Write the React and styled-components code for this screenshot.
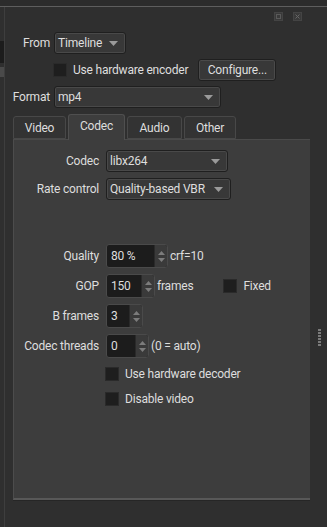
import React from 'react';
import styled, { createGlobalStyle } from 'styled-components';

const GlobalStyle = createGlobalStyle`
  html, body {
    margin: 0;
    padding: 0;
    background: #2f2f2f;
    color: #dedede;
    font-family: Roboto, "Liberation Sans", sans-serif;
    font-size: 12px;
    letter-spacing: -0.2px;
    overflow: hidden;
  }
`;

const Page = styled.div`
  display: flex;
  flex-direction: column;
  height: 100vh;
`;

const TopEdge = styled.div`
  height: 6px;
  background: #2c2c2c;
  border-bottom: 1px solid #5e5e5e;
`;

const Body = styled.div`
  flex: 1;
  display: flex;
  min-height: 0;
`;

const LeftStrip = styled.div`
  width: 4px;
  border-right: 1px solid #3e3e3e;
  background: #2f2f2f;
  display: flex;
  flex-direction: column;
  padding-top: 34px;
  gap: 4px;
`;

const StripBox = styled.div`
  height: ${(p) => p.$h}px;
  background: ${(p) => p.$bg};
`;

const Dock = styled.div`
  flex: 1;
  display: flex;
  flex-direction: column;
  padding: 0 0 27px 7px;
  min-width: 0;
`;

const TitleBar = styled.div`
  height: 18px;
  display: flex;
  justify-content: flex-end;
  align-items: center;
  gap: 10px;
  padding-right: 8px;
`;

const TitleButton = styled.div`
  width: 9px;
  height: 9px;
  display: flex;
`;

const TopForm = styled.div`
  display: grid;
  grid-template-columns: 38px auto;
  column-gap: 4px;
  row-gap: 5px;
  align-items: center;
  padding-top: 7px;
  margin-bottom: 5px;
`;

const Label = styled.div`
  text-align: right;
  white-space: nowrap;
`;

const Combo = styled.div`
  width: ${(p) => p.$w}px;
  height: 22px;
  box-sizing: border-box;
  border: 1px solid #1f1f1f;
  border-radius: 3px;
  background: #383838;
  box-shadow: inset 0 0 0 1px #494949;
  display: flex;
  align-items: center;
  justify-content: space-between;
  gap: 6px;
  padding: 0 7px 0 3px;
  white-space: nowrap;

  svg {
    flex: none;
  }
`;

const HwRow = styled.div`
  display: flex;
  align-items: center;
  height: 22px;
  margin-left: -1px;
`;

const CheckBox = styled.div`
  width: 14px;
  height: 14px;
  box-sizing: border-box;
  background: #1e1e1e;
  border: 1px solid #2a2a2a;
  flex: none;
`;

const CheckLabel = styled.span`
  margin-left: 6px;
  white-space: nowrap;
`;

const Button = styled.div`
  margin-left: 10px;
  height: 22px;
  box-sizing: border-box;
  width: 78px;
  display: flex;
  align-items: center;
  justify-content: center;
  border: 1px solid #1f1f1f;
  border-radius: 3px;
  background: #383838;
  box-shadow: inset 0 0 0 1px #4a4a4a;
  white-space: nowrap;
`;

const TabBar = styled.div`
  display: flex;
  align-items: flex-end;
  gap: 2px;
  margin-left: 1px;
  height: 26px;
`;

const Tab = styled.div`
  width: ${(p) => p.$w}px;
  height: ${(p) => (p.$active ? 26 : 23)}px;
  box-sizing: border-box;
  padding-bottom: ${(p) => (p.$active ? 3 : 0)}px;
  display: flex;
  align-items: center;
  justify-content: center;
  border: 1px solid ${(p) => (p.$active ? '#4f4f4f' : '#484848')};
  border-bottom: ${(p) => (p.$active ? 'none' : '1px solid #484848')};
  border-radius: 3px 3px 0 0;
  background: ${(p) => (p.$active ? '#3d3d3d' : '#333333')};
  margin-bottom: ${(p) => (p.$active ? '-1px' : '0')};
  position: relative;
  z-index: ${(p) => (p.$active ? 1 : 0)};
`;

const PaneRow = styled.div`
  flex: 1;
  display: flex;
  min-height: 0;
`;

const Pane = styled.div`
  width: 297px;
  box-sizing: border-box;
  margin-left: 1px;
  background: #3d3d3d;
  border-top: 1px solid #4a4a4a;
  border-left: 1px solid #4c4c4c;
  border-bottom: 2px solid #585858;
  box-shadow: 0 1px 0 #262626;
  padding: 10px 0 0 9px;
`;

const Form = styled.div`
  display: grid;
  grid-template-columns: 76px auto;
  column-gap: 7px;
  row-gap: 6px;
  align-items: center;
`;

const Field = styled.div`
  display: flex;
  align-items: center;
  height: ${(p) => p.$h || 24}px;
  white-space: nowrap;
`;

const Spacer = styled.div`
  grid-column: 1 / 3;
  height: 32px;
`;

const Spin = styled.div`
  width: ${(p) => p.$w}px;
  height: 24px;
  box-sizing: border-box;
  display: flex;
  border: 1px solid #4a4a4a;
  border-radius: 3px;
  background: #1c1c1c;
  flex: none;
`;

const SpinText = styled.div`
  flex: 1;
  display: flex;
  align-items: center;
  padding-left: 4px;
`;

const SpinButtons = styled.div`
  width: 12px;
  display: flex;
  flex-direction: column;
  justify-content: center;
  align-items: center;
  gap: 3px;
  background: #3a3a3a;
  border-left: 1px solid #2a2a2a;
  border-radius: 0 2px 2px 0;
`;

const After = styled.span`
  margin-left: 2px;
`;

const FixedCheck = styled.div`
  display: flex;
  align-items: center;
  margin-left: 30px;
`;

const Splitter = styled.div`
  width: 17px;
  display: flex;
  justify-content: center;
  padding-top: 322px;
  padding-left: 1px;
  box-sizing: border-box;
`;

const Grip = styled.div`
  width: 3px;
  height: 18px;
  background: repeating-linear-gradient(#7a7a7a 0 2px, transparent 2px 3px);
`;

const Arrow = () => (
  <svg width="9" height="5" viewBox="0 0 9 5">
    <path d="M0 0h9L4.5 5z" fill="#9a9a9a" />
  </svg>
);

const SpinArrow = ({ up }) => (
  <svg width="7" height="4" viewBox="0 0 7 4">
    <path d={up ? 'M0 4h7L3.5 0z' : 'M0 0h7L3.5 4z'} fill="#7c7c7c" />
  </svg>
);

const SpinBox = ({ w, value }) => (
  <Spin $w={w}>
    <SpinText>{value}</SpinText>
    <SpinButtons>
      <SpinArrow up />
      <SpinArrow />
    </SpinButtons>
  </Spin>
);

const CheckItem = ({ children }) => (
  <Field $h={19} style={{ marginLeft: -1 }}>
    <CheckBox />
    <CheckLabel>{children}</CheckLabel>
  </Field>
);

const App = () => (
  <Page>
    <GlobalStyle />
    <TopEdge />
    <Body>
      <LeftStrip>
        <StripBox $h={22} $bg="#1c1c1c" />
        <StripBox $h={10} $bg="#4a4a4a" />
      </LeftStrip>
      <Dock>
        <TitleBar>
          <TitleButton>
            <svg width="9" height="9" viewBox="0 0 9 9">
              <rect x="0.5" y="0.5" width="8" height="8" fill="#3a3a3a" stroke="#444" />
              <rect x="2.5" y="2.5" width="4" height="4" fill="none" stroke="#5a5a5a" />
            </svg>
          </TitleButton>
          <TitleButton>
            <svg width="9" height="9" viewBox="0 0 9 9">
              <rect x="0.5" y="0.5" width="8" height="8" fill="#3a3a3a" stroke="#444" />
              <path d="M2.5 2.5l4 4M6.5 2.5l-4 4" stroke="#666" />
            </svg>
          </TitleButton>
        </TitleBar>
        <TopForm>
          <Label>From</Label>
          <Combo $w={72}>
            Timeline
            <Arrow />
          </Combo>
          <div />
          <HwRow>
            <CheckBox />
            <CheckLabel>Use hardware encoder</CheckLabel>
            <Button>Configure...</Button>
          </HwRow>
          <Label>Format</Label>
          <Combo $w={167}>
            mp4
            <Arrow />
          </Combo>
        </TopForm>
        <TabBar>
          <Tab $w={53}>Video</Tab>
          <Tab $w={57} $active>Codec</Tab>
          <Tab $w={55}>Audio</Tab>
          <Tab $w={52}>Other</Tab>
        </TabBar>
        <PaneRow>
          <Pane>
            <Form>
              <Label>Codec</Label>
              <Field $h={22}>
                <Combo $w={122}>
                  libx264
                  <Arrow />
                </Combo>
              </Field>
              <Label>Rate control</Label>
              <Field $h={22}>
                <Combo $w={125}>
                  Quality-based VBR
                  <Arrow />
                </Combo>
              </Field>
              <Spacer />
              <Label>Quality</Label>
              <Field>
                <SpinBox w={62} value="80 %" />
                <After>crf=10</After>
              </Field>
              <Label>GOP</Label>
              <Field>
                <SpinBox w={49} value="150" />
                <After>frames</After>
                <FixedCheck>
                  <CheckBox />
                  <CheckLabel>Fixed</CheckLabel>
                </FixedCheck>
              </Field>
              <Label>B frames</Label>
              <Field>
                <SpinBox w={37} value="3" />
              </Field>
              <Label>Codec threads</Label>
              <Field>
                <SpinBox w={43} value="0" />
                <After>(0 = auto)</After>
              </Field>
              <div />
              <CheckItem>Use hardware decoder</CheckItem>
              <div />
              <CheckItem>Disable video</CheckItem>
            </Form>
          </Pane>
        </PaneRow>
      </Dock>
      <Splitter>
        <Grip />
      </Splitter>
    </Body>
  </Page>
);

export default App;
